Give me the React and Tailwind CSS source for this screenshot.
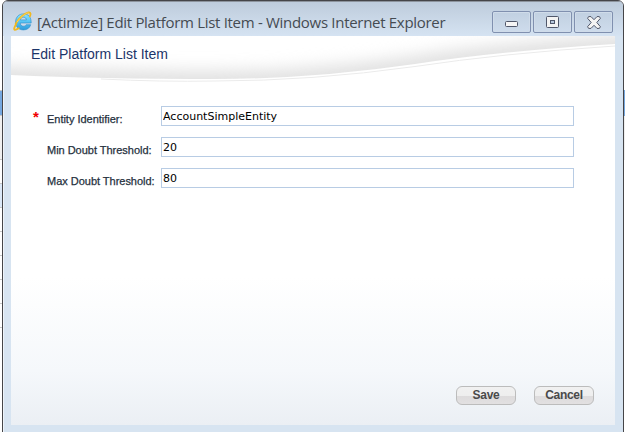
import React from 'react';

const edgeRows = [
  'h-[91px] bg-white',
  'h-[25px] bg-[#75a8e0]',
  'h-[44px] bg-[#f0f0f0]',
  'h-[24px] bg-white',
  'h-[24px] bg-[#dce9f8]',
  'h-6 bg-white',
  'h-6 bg-white',
  'h-6 bg-white',
  'h-6 bg-white',
  'h-6 bg-white',
];

function BrowserIcon() {
  return (
    <svg className="ml-[10px] mt-[10px] h-5 w-5 shrink-0" viewBox="0 0 20 20" fill="none">
      <defs>
        <linearGradient id="eBlue" x1="0" y1="0" x2="0" y2="1">
          <stop offset="0" stopColor="#8be2fe" />
          <stop offset="0.5" stopColor="#55c3f2" />
          <stop offset="1" stopColor="#2f9bdb" />
        </linearGradient>
      </defs>
      <path
        d="M18.200 12H7.200c.2 2 1.400 3.200 3.300 3.200 1.300 0 2.200-.5 2.700-1.500h4.500c-1 3.400-3.500 5.200-7.200 5.200-4.900 0-7.900-3-7.900-7.900 0-4.900 3.100-8.100 7.900-8.100 5 0 7.800 3.200 7.700 9.100zM7.300 8.900h6.100c-.2-1.700-1.300-2.700-3-2.700s-2.800 1-3.100 2.700z"
        fill="url(#eBlue)"
        stroke="#2b8cca"
        strokeWidth=".6"
      />
      <path
        d="M3 13.500C.9 16.600.7 18.700 1.900 18.800c1.200.1 2.500-.7 3.900-1.600M2.600 13C5.400 7.500 11.400 2.300 15.400 1.500c2.500-.4 2.600 1.500 1.500 3.900"
        stroke="#f0b820"
        strokeWidth="1.800"
        strokeLinecap="round"
      />
      <path d="M4 11.200C7 6.500 12 2.500 15.600 1.700" stroke="#ffe27a" strokeWidth=".6" />
    </svg>
  );
}

function CaptionButton({ label, children }) {
  return (
    <button
      aria-label={label}
      className="flex h-[22px] w-[39px] items-center justify-center rounded-[2px] border border-[#8090af] bg-gradient-to-b from-[#c1d0e1] to-[#cedcec] shadow-[inset_0_0_0_1px_#d0dcea]"
    >
      {children}
    </button>
  );
}

function TitleBar() {
  return (
    <header className="flex h-[35px] items-start bg-gradient-to-b from-[#bdcbdb] to-[#d5e3f2] shadow-[inset_0_1px_0_#8d949d]">
      <BrowserIcon />
      <h1 className="ml-[4px] mt-[9px] w-[420px] whitespace-nowrap font-['Open_Sans','Noto_Sans',sans-serif] text-[15px] leading-6 tracking-[-0.3px] text-[#454b52]">
        [Actimize] Edit Platform List Item - Windows Internet Explorer
      </h1>
      <div className="ml-auto mr-[10px] mt-[10px] flex gap-[2px]">
        <CaptionButton label="Minimize">
          <svg className="mt-[5px] h-[7px] w-[13px]" viewBox="0 0 13 7">
            <rect x=".5" y=".5" width="12" height="5" rx="1" fill="#f5f5f5" stroke="#50576a" />
          </svg>
        </CaptionButton>
        <CaptionButton label="Maximize">
          <svg className="h-3 w-[13px]" viewBox="0 0 13 12">
            <rect x=".5" y=".5" width="12" height="11" rx="1" fill="#f3f3f3" stroke="#50576a" />
            <rect x="4.500" y="4.500" width="4" height="3" fill="#b7c8dc" stroke="#50576a" />
          </svg>
        </CaptionButton>
        <CaptionButton label="Close">
          <svg className="h-[13px] w-[14px]" viewBox="0 0 14 13">
            <path
              d="M1.600.6h2.400L7 3.700 10 .6h2.400l1 1.700-3.600 4.200 3.600 4.200-1 1.700H10L7 9.300l-3 3.100H1.600l-1-1.700 3.600-4.200L.6 2.300z"
              fill="#f4f4f4"
              stroke="#50576a"
            />
          </svg>
        </CaptionButton>
      </div>
    </header>
  );
}

function Swoosh() {
  return (
    <svg className="absolute left-0 top-0 h-[50px] w-[604px]" viewBox="0 0 604 50" fill="none">
      <defs>
        <clipPath id="swooshClip">
          <path d="M0 0H604V8Q490 15 404 28Q300 43 204 43Q90 43 0 39Z" />
        </clipPath>
        <filter id="swooshSoft" x="-10%" y="-100%" width="120%" height="300%" colorInterpolationFilters="sRGB">
          <feGaussianBlur stdDeviation="8" />
        </filter>
      </defs>
      <g clipPath="url(#swooshClip)">
        <path
          d="M-40 41L0 43Q90 47 204 47Q300 47 404 32Q490 19 604 12L644 10"
          stroke="#e1e1e1"
          strokeWidth="25"
          filter="url(#swooshSoft)"
        />
      </g>
      <path d="M90 43Q150 46 204 45Q300 45 404 30.500Q490 17.500 604 10" stroke="#ebebeb" />
    </svg>
  );
}

function Field({ label, value, required }) {
  return (
    <div className="flex h-5">
      <span className="w-[14px] font-['Liberation_Sans',Arial,sans-serif] text-[15px] font-bold leading-[22px] text-[#f00000]">
        {required ? '*' : ''}
      </span>
      <label className="w-[114px] whitespace-nowrap pt-[5px] font-['Liberation_Sans',Arial,sans-serif] text-[11px] leading-4 tracking-[-0.02px] text-[#25303d] [-webkit-text-stroke:0.25px_#25303d]">
        {label}
      </label>
      <input
        aria-label={label}
        defaultValue={value}
        className="h-5 w-[413px] border border-[#b8cce4] bg-white px-px pt-px font-['DejaVu_Sans',Verdana,sans-serif] text-[11px] text-black outline-none"
      />
    </div>
  );
}

function FormButton({ children }) {
  return (
    <button className="h-[19px] w-[60px] rounded-[6px] border border-[#bcbcbc] bg-[linear-gradient(#f1f1f1_0%,#eeeeee_50%,#dddbdc_51%,#e2e0e1_100%)] pb-px font-['Liberation_Sans',Arial,sans-serif] text-[12px] font-bold leading-4 tracking-[-0.3px] text-[#4a4a4a]">
      {children}
    </button>
  );
}

export default function App() {
  return (
    <div className="flex h-[432px] w-[625px] overflow-hidden bg-white">
      <div className="w-[2px] shrink-0">
        {edgeRows.map((row, i) => (
          <div key={i} className={`border-b border-[#c8c8c8] ${row}`} />
        ))}
      </div>
      <div className="h-[440px] w-[622px] shrink-0 overflow-hidden rounded-t-[6px] border border-[#454548] bg-[#d7e4f1] shadow-[inset_1px_1px_0_#eef4fa]">
        <TitleBar />
        <main className="relative ml-2 flex h-[389px] w-[604px] flex-col bg-[linear-gradient(#fff_0%,#fff_62%,#f5f8fb_86%,#ebeff4_100%)]">
          <Swoosh />
          <h2 className="relative h-[70px] pl-5 pt-[9px] font-['Liberation_Sans',Arial,sans-serif] text-[14px] leading-[18px] text-[#1c3569]">
            Edit Platform List Item
          </h2>
          <form className="flex flex-col gap-[11px] pl-[22px]">
            <Field label="Entity Identifier:" value="AccountSimpleEntity" required />
            <Field label="Min Doubt Threshold:" value="20" />
            <Field label="Max Doubt Threshold:" value="80" />
          </form>
          <footer className="mb-5 mr-[21px] mt-auto flex justify-end gap-[18px]">
            <FormButton>Save</FormButton>
            <FormButton>Cancel</FormButton>
          </footer>
        </main>
      </div>
      <div className="w-px shrink-0">
        <div className="h-[90px] bg-white" />
        <div className="h-[26px] bg-[#75a8e0]" />
        <div className="h-11 bg-[#eeeeee]" />
      </div>
    </div>
  );
}
